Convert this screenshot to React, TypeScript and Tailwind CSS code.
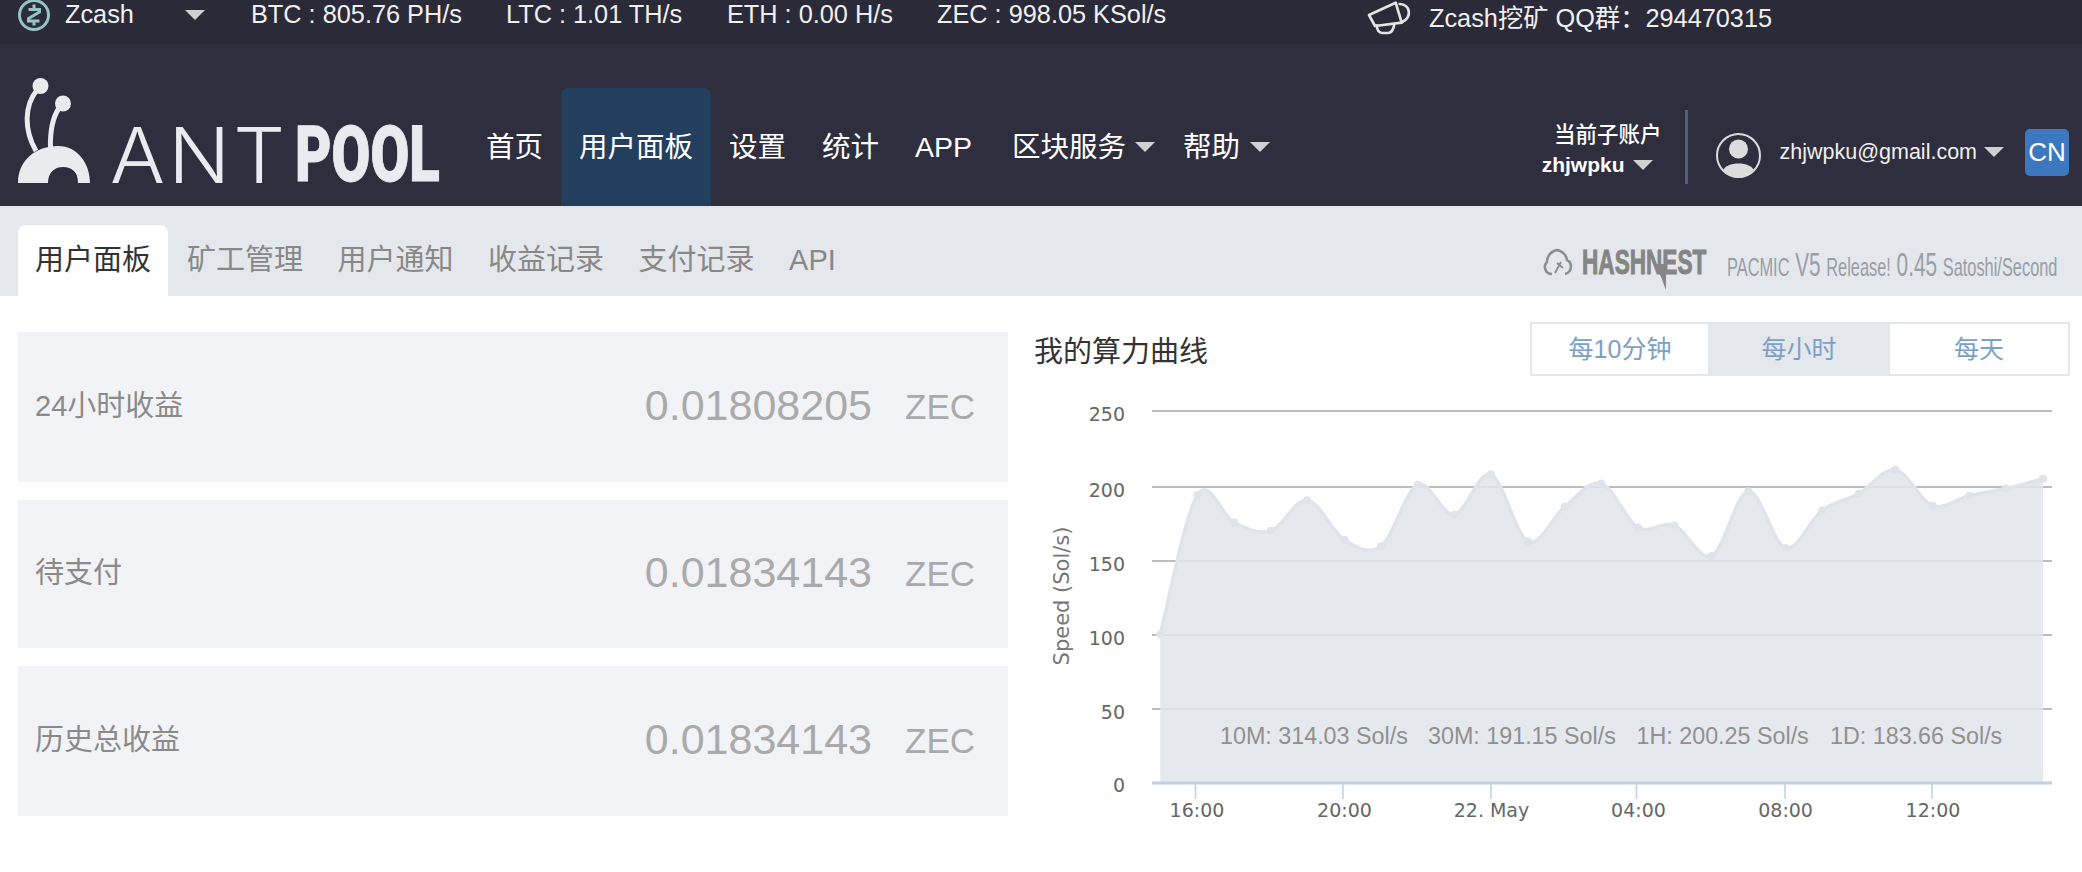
import React from 'react';

const sans = "font-['Liberation_Sans','Noto_Sans_CJK_SC',sans-serif]";

// chart points as read off the picture, in page pixels
const RAW = [
  [207, 903], [262, 515], [316, 592], [370, 615], [424, 530], [479, 640], [533, 658], [587, 487],
  [641, 570], [695, 458], [750, 645], [804, 548], [858, 483], [912, 606], [966, 600], [1021, 685],
  [1075, 505], [1130, 663], [1184, 558], [1238, 512], [1292, 445], [1347, 545], [1401, 517],
  [1455, 497], [1510, 470],
];
const POINTS = RAW.map(([x, y]) => [1020 + x / 1.476, 310 + y / 2.785]);

function spline(pts: number[][]) {
  let d = `M${pts[0][0]} ${pts[0][1]}`;
  for (let i = 0; i < pts.length - 1; i++) {
    const p0 = pts[i - 1] || pts[i];
    const p1 = pts[i];
    const p2 = pts[i + 1];
    const p3 = pts[i + 2] || p2;
    const c1x = p1[0] + (p2[0] - p0[0]) / 6;
    const c1y = p1[1] + (p2[1] - p0[1]) / 6;
    const c2x = p2[0] - (p3[0] - p1[0]) / 6;
    const c2y = p2[1] - (p3[1] - p1[1]) / 6;
    d += ` C${c1x} ${c1y} ${c2x} ${c2y} ${p2[0]} ${p2[1]}`;
  }
  return d;
}

function Arrow({ className = '' }: { className?: string }) {
  return (
    <span className={`inline-block h-0 w-0 border-x-[10px] border-t-[10px] border-x-transparent border-t-[#d0d0d0] ${className}`} />
  );
}

function ZcashIcon() {
  return (
    <svg viewBox="0 0 32 32" className="-mt-[1px] h-8 w-8 shrink-0">
      <circle cx="16" cy="16" r="14.5" fill="#2c2c3a" stroke="#96c4c6" strokeWidth="3" />
      <path d="M16 5.5v4.5M16 22v4.5M10.5 10.5h11v2.5l-11 6.5v2.5h11" fill="none" stroke="#96c4c6" strokeWidth="3" />
    </svg>
  );
}

function MegaphoneIcon() {
  return (
    <svg viewBox="30 0 150 132" className="h-[44px] w-[50px] shrink-0" fill="none" stroke="#e4e4e4" strokeWidth="8" strokeLinejoin="round" strokeLinecap="round">
      <path d="M42 45 L122 8 L140 68 L60 78 Z" />
      <path d="M134 12 C166 14 172 50 142 66" />
      <path d="M65 76 C66 88 72 98 82 99 L100 99 C110 98 116 86 118 72" />
    </svg>
  );
}

function TopBar() {
  const stats = [
    ['BTC : 805.76 PH/s', 'w-[255px]'],
    ['LTC : 1.01 TH/s', 'w-[221px]'],
    ['ETH : 0.00 H/s', 'w-[210px]'],
    ['ZEC : 998.05 KSol/s', 'w-[428px]'],
  ];
  return (
    <div className="flex h-[44px] items-start bg-[#2a2a38] pl-[18px] text-[25.3px] leading-[28px] text-[#f0f0f0]">
      <ZcashIcon />
      <span className="ml-[15px] w-[120px]">Zcash</span>
      <Arrow className="mt-[10px] mr-[46px]" />
      {stats.map(([text, width]) => (
        <span key={text} className={width}>{text}</span>
      ))}
      <MegaphoneIcon />
      <span className="ml-[14px] pt-[4px]">Zcash挖矿 QQ群：294470315</span>
    </div>
  );
}

function Logo() {
  return (
    <div className="flex h-[127px] w-[450px] shrink-0 items-end">
      <svg viewBox="18 77 74 106" className="h-[106px] w-[74px] shrink-0">
        <path d="M18 183 C18 160 36 146 58 146 C78 146 90 164 90 183 H78 C78 172 72 167 63 167 C54 167 48 173 48 183 Z" fill="#e9ecef" />
        <path d="M37 90 C24 106 24 130 36 151" fill="none" stroke="#e9ecef" strokeWidth="5" />
        <circle cx="40.5" cy="86" r="8" fill="#e9ecef" />
        <path d="M59 108 C51 120 50 134 50.5 149" fill="none" stroke="#e9ecef" strokeWidth="5" />
        <circle cx="63" cy="103.5" r="8" fill="#e9ecef" />
      </svg>
      <span className="ml-[18px] w-[185px] shrink-0 origin-left scale-x-[1.06] font-['Inter'] text-[77px] leading-[56px] font-light tracking-[3px] text-[#e9ecef]">ANT</span>
      <span className="origin-left scale-x-[0.73] font-['Roboto'] text-[77px] leading-[56px] font-black text-[#e9ecef] [-webkit-text-stroke:1px_#e9ecef]">POOL</span>
    </div>
  );
}

function MainNav() {
  const items = ['首页', '用户面板', '设置', '统计', 'APP'];
  return (
    <nav className="flex h-[118px] items-center text-[28.5px] text-white">
      {items.map((item) => (
        <a key={item} className={`flex h-full items-center rounded-t-lg px-[18px] ${item === '用户面板' ? 'bg-[#243f5e]' : ''}`}>
          {item}
        </a>
      ))}
      <a className="flex h-full items-center pl-[22px]">区块服务<Arrow className="ml-[9px]" /></a>
      <a className="flex h-full items-center pl-[28px]">帮助<Arrow className="ml-[10px]" /></a>
    </nav>
  );
}

function AccountArea() {
  return (
    <div className="ml-auto flex h-[118px] items-start pr-[13px] text-white">
      <div className="mt-[32px] flex flex-col items-end pr-[23px]">
        <span className="text-[21.5px] leading-[30px] font-medium">当前子账户</span>
        <span className="flex items-center text-[21px] leading-[30px] font-bold">
          zhjwpku<Arrow className="mr-[9px] ml-[8px]" />
        </span>
      </div>
      <div className="mt-[22px] h-[74px] w-[3px] bg-[#48627c]" />
      <svg viewBox="0 0 45 45" className="mt-[45px] ml-[28px] h-[45px] w-[45px]">
        <circle cx="22.5" cy="22.5" r="21.5" fill="none" stroke="#dcdcdc" strokeWidth="2" />
        <circle cx="22.5" cy="16" r="9.5" fill="#dcdcdc" />
        <path d="M7 38 C9 28 36 28 38 38 A21 21 0 0 1 7 38 Z" fill="#dcdcdc" />
      </svg>
      <span className="mt-[49px] ml-[19px] text-[21.5px] leading-[30px] text-[#f0f0f0]">zhjwpku@gmail.com</span>
      <Arrow className="mt-[59px] ml-[7px]" />
      <span className="mt-[41px] ml-[21px] flex h-[47px] w-[44px] items-center justify-center rounded-[5px] bg-[#3c78c0] text-[26px]">CN</span>
    </div>
  );
}

function HashnestBanner() {
  return (
    <div className="flex items-center pr-[22px] text-[#9a9ea6]">
      <svg viewBox="0 0 30 28" className="h-[28px] w-[30px] shrink-0" fill="none" stroke="#8f8f8f" strokeWidth="2.6">
        <path d="M9 26 C2 26 0 18 4 14 C4 6 12 0 17 3 C22 5 24 10 24 12 C29 14 30 24 22 26" />
        <path d="M12 25 L18 14 M14 15 L20 20" strokeWidth="2" />
      </svg>
      <span className="relative ml-[9px] h-[36px] w-[126px] shrink-0">
        <span className="block origin-left scale-x-[0.655] text-[34.5px] leading-[36px] font-bold whitespace-nowrap text-[#858585] [-webkit-text-stroke:1px_#858585]">
          HASHNEST
        </span>
        <svg viewBox="0 0 12 26" className="absolute top-[20px] left-[74px] h-[26px] w-[12px]">
          <polygon points="0,0 10,0 10,26" fill="#858585" />
        </svg>
      </span>
      <span className="mt-[6px] ml-[19px] w-[333px] shrink-0">
        <span className="flex origin-left scale-x-[0.63] items-baseline whitespace-nowrap">
          <span className="text-[26px]">PACMIC</span>
          <span className="ml-[9px] text-[33px]">V5</span>
          <span className="ml-[9px] text-[26px]">Release!</span>
          <span className="ml-[9px] text-[33px]">0.45</span>
          <span className="ml-[9px] text-[26px]">Satoshi/Second</span>
        </span>
      </span>
    </div>
  );
}

function SubNav() {
  const tabs = ['用户面板', '矿工管理', '用户通知', '收益记录', '支付记录', 'API'];
  return (
    <div className="flex h-[90px] items-end bg-[#e4e7ec] pl-[18px]">
      {tabs.map((tab, i) => (
        <a
          key={tab}
          className={`flex h-[71px] items-center rounded-t-lg px-[17px] text-[29px] ${i === 0 ? 'mr-[2px] bg-white text-[#333]' : 'mr-[0.5px] text-[#888]'}`}
        >
          {tab}
        </a>
      ))}
      <div className="ml-auto h-full pt-[28px]">
        <HashnestBanner />
      </div>
    </div>
  );
}

function EarningRow({ label, value, height }: { label: string; value: string; height: string }) {
  return (
    <div className={`flex items-center bg-[#f2f3f7] pr-[33px] pl-[17px] ${height}`}>
      <span className="text-[29px] text-[#8a8a8a]">{label}</span>
      <span className="-mt-[3px] ml-auto text-[43px] text-[#aaa]">{value}</span>
      <span className="ml-[33px] text-[35px] text-[#aaa]">ZEC</span>
    </div>
  );
}

function HashChart() {
  const line = spline(POINTS);
  const first = POINTS[0];
  const last = POINTS[POINTS.length - 1];
  const area = `${line} L${last[0]} 783 L${first[0]} 783 Z`;
  const grid = [
    [411, '250'], [487, '200'], [561, '150'], [635, '100'], [709, '50'],
  ] as const;
  const ticks = [
    [1195.5, 1197, '16:00'], [1343, 1344.5, '20:00'], [1491, 1491.5, '22. May'],
    [1636.5, 1638.5, '04:00'], [1785, 1785.6, '08:00'], [1932, 1933, '12:00'],
  ] as const;
  const legend = [
    [1220, '10M: 314.03 Sol/s'], [1428, '30M: 191.15 Sol/s'], [1636.5, '1H: 200.25 Sol/s'], [1830, '1D: 183.66 Sol/s'],
  ] as const;

  return (
    <svg viewBox="1034 380 1048 492" className="mt-[4px] block h-[492px] w-[1048px]">
      {grid.map(([y]) => (
        <line key={y} x1="1152" x2="2052" y1={y} y2={y} stroke="#bdbdbd" strokeWidth="2" />
      ))}
      <path d={area} fill="#e0e4ea" fillOpacity="0.85" />
      <path d={line} fill="none" stroke="#e0e4ea" strokeWidth="3.5" />
      {POINTS.map(([x, y]) => (
        <circle key={x} cx={x} cy={y} r="4" fill="#e0e4ea" />
      ))}
      <line x1="1152" x2="2052" y1="783" y2="783" stroke="#c0d0e0" strokeWidth="3" />
      {ticks.map(([x]) => (
        <line key={x} x1={x} x2={x} y1="783" y2="799" stroke="#c0d0e0" strokeWidth="1.5" />
      ))}
      <g fontFamily="DejaVu Sans, sans-serif" fontSize="19" fill="#666">
        {grid.map(([y, label]) => (
          <text key={label} x="1125" y={y + 10} textAnchor="end">{label}</text>
        ))}
        <text x="1125" y="792" textAnchor="end">0</text>
        {ticks.map(([, x, label]) => (
          <text key={label} x={x} y="817" textAnchor="middle">{label}</text>
        ))}
        <text transform="translate(1069 596) rotate(-90)" textAnchor="middle" fontSize="21" fill="#777">Speed (Sol/s)</text>
      </g>
      <g fontFamily="Liberation Sans, sans-serif" fontSize="23.3" fill="#909090">
        {legend.map(([x, label]) => (
          <text key={label} x={x} y="744">{label}</text>
        ))}
      </g>
    </svg>
  );
}

function ChartPanel() {
  const ranges = ['每10分钟', '每小时', '每天'];
  return (
    <div className="ml-[26px] flex-1">
      <div className="flex h-[54px] items-center pr-[12px]">
        <h2 className="pt-[7px] text-[29px] font-normal text-[#333]">我的算力曲线</h2>
        <div className="ml-auto grid h-[54px] w-[540px] grid-cols-[176px_182px_1fr] border-2 border-[#e4e7ec]">
          {ranges.map((range, i) => (
            <button key={range} type="button" className={`pt-[2px] text-[25px] text-[#7c9fc4] ${i === 1 ? 'bg-[#e4e7ec]' : ''}`}>
              {range}
            </button>
          ))}
        </div>
      </div>
      <HashChart />
    </div>
  );
}

export default function App() {
  return (
    <div className={`h-[872px] overflow-hidden bg-white ${sans}`}>
      <TopBar />
      <header className="flex h-[162px] items-end bg-[#2e2e3e] pl-[18px]">
        <div className="flex h-[116px] items-end pb-[23px]">
          <Logo />
        </div>
        <MainNav />
        <AccountArea />
      </header>
      <SubNav />
      <main className="flex pt-[26px]">
        <div className="ml-[18px] flex w-[990px] shrink-0 flex-col gap-[18px] pt-[10px]">
          <EarningRow label="24小时收益" value="0.01808205" height="h-[150px]" />
          <EarningRow label="待支付" value="0.01834143" height="h-[148px]" />
          <EarningRow label="历史总收益" value="0.01834143" height="h-[150px]" />
        </div>
        <ChartPanel />
      </main>
    </div>
  );
}
